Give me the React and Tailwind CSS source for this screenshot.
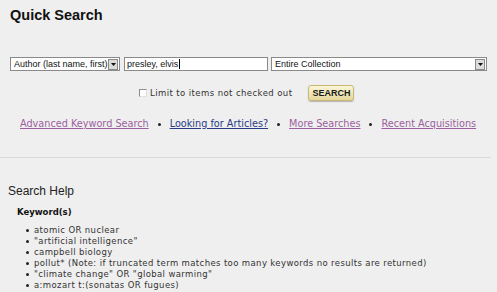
import React from 'react';

const sans = { fontFamily: '"Liberation Sans", Arial, sans-serif' };
const verd = { fontFamily: '"DejaVu Sans", Verdana, sans-serif' };

const Arrow = () => (
  <span className="flex h-[11px] w-[10px] items-center justify-center border border-[#8a8a8a] bg-[#dcdcd8]">
    <svg width="5" height="3" viewBox="0 0 5 3">
      <path d="M0 0h5L2.5 3z" fill="#111" />
    </svg>
  </span>
);

const FakeSelect = ({ value, className }) => (
  <div
    className={`flex h-[14px] items-center justify-between border border-[#8a8a8a] bg-white pl-[3px] pr-[1px] text-[9px] text-[#111] ${className}`}
    style={sans}
  >
    <span className="leading-none">{value}</span>
    <Arrow />
  </div>
);

const links = [
  { label: 'Advanced Keyword Search', color: 'text-[#9b5fa0]' },
  { label: 'Looking for Articles?', color: 'text-[#2a3a86]' },
  { label: 'More Searches', color: 'text-[#9b5fa0]' },
  { label: 'Recent Acquisitions', color: 'text-[#9b5fa0]' },
];

const examples = [
  'atomic OR nuclear',
  '"artificial intelligence"',
  'campbell biology',
  'pollut* (Note: if truncated term matches too many keywords no results are returned)',
  '"climate change" OR "global warming"',
  'a:mozart t:(sonatas OR fugues)',
];

export default function App() {
  return (
    <div className="h-[292px] w-[497px] overflow-hidden bg-[#efefef]">
      <h1 className="pl-[10px] pt-[6px] text-[14.5px] font-bold leading-[18px] text-[#111]" style={sans}>
        Quick Search
      </h1>

      <div className="mt-[33px] flex items-center pl-[10px]">
        <FakeSelect value="Author (last name, first)" className="w-[110px]" />
        <div
          className="ml-[4px] flex h-[14px] w-[144px] items-center border border-[#8a8a8a] bg-white pl-[2px] text-[9px] leading-none text-[#111]"
          style={sans}
        >
          presley, elvis
          <span className="ml-px h-[10px] w-px bg-black" />
        </div>
        <FakeSelect value="Entire Collection" className="ml-[3px] w-[216px]" />
      </div>

      <div className="mt-[14px] flex items-center pl-[139px]">
        <span className="h-[8px] w-[8px] border border-[#8d8d8d] border-r-[#e0e0e0] border-b-[#e0e0e0] bg-white" />
        <span className="ml-[3px] text-[8.5px] leading-none tracking-[0.42px] text-[#333]" style={verd}>
          Limit to items not checked out
        </span>
        <button
          className="ml-[16px] h-[16px] w-[46px] rounded-[3px] border border-[#c8b878] bg-gradient-to-b from-[#fbf6d8] to-[#e4d79c] text-[9px] font-bold leading-none text-[#1a1a1a] shadow-[0_1px_1px_rgba(0,0,0,0.25)]"
          style={sans}
        >
          SEARCH
        </button>
      </div>

      <div className="mt-[16px] flex items-center pl-[20px] text-[9.7px] leading-[14px]" style={verd}>
        {links.map((l, i) => (
          <React.Fragment key={l.label}>
            {i > 0 && <span className="mx-[9px] h-[3px] w-[3px] rounded-full bg-[#222]" />}
            <a href="#" className={`${l.color} underline`}>
              {l.label}
            </a>
          </React.Fragment>
        ))}
      </div>

      <div className="mr-[6px] mt-[26px] h-px bg-[#d9d9d9]" />

      <h2 className="pl-[8px] pt-[26px] text-[12px] leading-[14px] text-[#222]" style={sans}>
        Search Help
      </h2>
      <h3 className="pl-[17px] pt-[8px] text-[8.5px] font-bold leading-[12px] text-[#111]" style={verd}>
        Keyword(s)
      </h3>
      <ul className="pl-[26px] pt-[7px] text-[8.5px] leading-[11px] tracking-[0.38px] text-[#333]" style={verd}>
        {examples.map((e) => (
          <li key={e} className="flex items-center">
            <span className="mr-[5px] h-[3px] w-[3px] rounded-full bg-[#222]" />
            {e}
          </li>
        ))}
      </ul>
    </div>
  );
}
